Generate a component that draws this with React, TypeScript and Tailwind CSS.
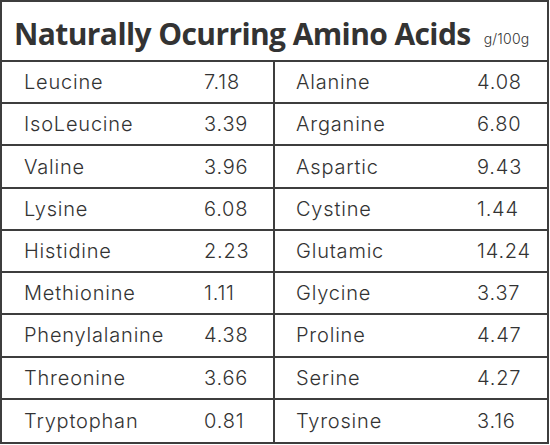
const rows: [string, string, string, string][] = [
  ['Leucine', '7.18', 'Alanine', '4.08'],
  ['IsoLeucine', '3.39', 'Arganine', '6.80'],
  ['Valine', '3.96', 'Aspartic', '9.43'],
  ['Lysine', '6.08', 'Cystine', '1.44'],
  ['Histidine', '2.23', 'Glutamic', '14.24'],
  ['Methionine', '1.11', 'Glycine', '3.37'],
  ['Phenylalanine', '4.38', 'Proline', '4.47'],
  ['Threonine', '3.66', 'Serine', '4.27'],
  ['Tryptophan', '0.81', 'Tyrosine', '3.16'],
];

export default function App() {
  return (
    <div className="w-[550px] h-[445px] bg-white">
      <div className="w-[549px] h-[444px] border-2 border-[#3d3d3d] flex flex-col text-[#333]">
        {/* Title */}
        <div className="h-[60px] shrink-0 flex items-end pb-[11px] pl-[12px] border-b-2 border-[#3d3d3d] whitespace-nowrap">
          <h1 className="text-[30px] font-bold leading-none font-['Open_Sans',sans-serif] tracking-[-0.6px]">
            Naturally Ocurring Amino Acids
          </h1>
          <span className="ml-[13px] mb-[3px] text-[14px] leading-none font-['Inter',sans-serif] font-light tracking-[0.2px]">g/100g</span>
        </div>

        {/* Rows */}
        <div className="flex-1 grid grid-rows-9">
          {rows.map(([a, av, b, bv], i) => (
            <div
              key={a}
              className={`grid grid-cols-[273px_1fr] ${i < rows.length - 1 ? 'border-b-2 border-[#3d3d3d]' : ''}`}
            >
              <div className="flex items-center pl-[22px] border-r-2 border-[#3d3d3d] text-[20px] font-light font-['Inter',sans-serif] tracking-[0.8px]">
                <span className="w-[180px]">{a}</span>
                <span>{av}</span>
              </div>
              <div className="flex items-center pl-[21px] text-[20px] font-light font-['Inter',sans-serif] tracking-[0.8px]">
                <span className="w-[181px]">{b}</span>
                <span>{bv}</span>
              </div>
            </div>
          ))}
        </div>
      </div>
    </div>
  );
}
